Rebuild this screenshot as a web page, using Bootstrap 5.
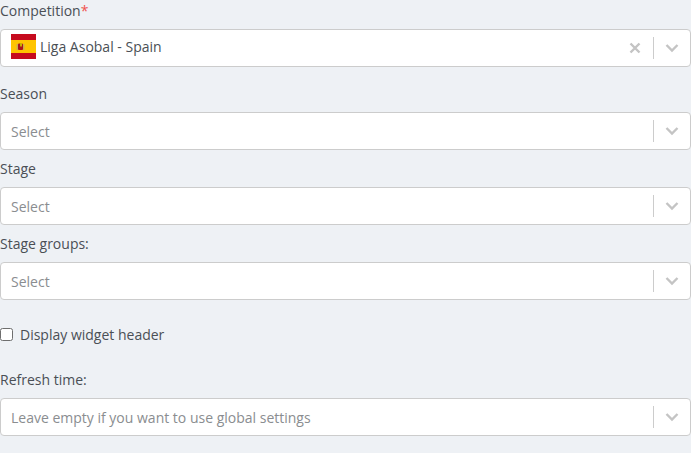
<!DOCTYPE html>
<html lang="en">
<head>
<meta charset="utf-8">
<title>Widget settings</title>
<link rel="stylesheet" href="https://cdn.jsdelivr.net/npm/bootstrap@5.3.0/dist/css/bootstrap.min.css">
<style>
html,body{background:#eef1f5;}
body{font-family:"Open Sans","Liberation Sans",sans-serif;font-size:14px;line-height:21px;color:#4a4f55;height:453px;overflow:hidden;}
.fld-label{display:block;margin-bottom:8px;height:21px;}
.req{color:#f0524f;}
.fld-group{margin-bottom:8px;}
.fld-group.first{margin-bottom:16px;}
.sel-box{height:38px;background:#fff;border:1px solid #cccccc;border-radius:4px;padding-left:10px;}
.sel-ph{color:#8a8d90;}
.sel-val{color:#4a4f55;padding-bottom:4px;}
.sel-sep{width:1px;height:22px;background:#cccccc;}
.sel-ico{width:36px;}
.sel-x{width:36px;margin-left:-1px;}
.flag{width:25px;height:25px;margin:-3px 4px 0 0;flex:none;}
.chk-row{margin-top:24px;margin-bottom:24px;height:21px;}
.chk-box{width:13px;height:13px;border:1px solid #6e6e6e;border-radius:2.5px;background:#fff;margin:0 7px 0 0;appearance:none;flex:none;}
</style>
</head>
<body>
<div class="fld-group first">
  <label class="fld-label">Competition<span class="req">*</span></label>
  <div class="sel-box d-flex align-items-center">
    <svg class="flag" viewBox="0 0 25 25" aria-hidden="true">
      <rect width="25" height="25" fill="#c60b1e"/>
      <rect y="6" width="25" height="13" fill="#ffc400"/>
      <rect x="7" y="9.5" width="5" height="6.5" rx="1" fill="#ad1519"/>
      <rect x="9" y="9" width="2" height="3.5" fill="#c8b100"/>
      <rect x="5.7" y="10" width="1" height="6" fill="#b5a27a"/>
      <rect x="12.3" y="10" width="1" height="6" fill="#b5a27a"/>
    </svg>
    <span class="sel-val flex-grow-1">Liga Asobal - Spain</span>
    <svg class="sel-x" height="12" viewBox="0 0 36 12" aria-hidden="true"><path d="M13.5 1.5l9 9M22.5 1.5l-9 9" stroke="#c4c4c4" stroke-width="2.4" fill="none"/></svg>
    <span class="sel-sep"></span>
    <svg class="sel-ico" height="10" viewBox="0 0 36 10" aria-hidden="true"><path d="M12.5 2l5.5 5.5L23.5 2" stroke="#c4c4c4" stroke-width="2.4" fill="none"/></svg>
  </div>
</div>
<div class="fld-group">
  <label class="fld-label">Season</label>
  <div class="sel-box d-flex align-items-center">
    <span class="sel-ph flex-grow-1">Select</span>
    <span class="sel-sep"></span>
    <svg class="sel-ico" height="10" viewBox="0 0 36 10" aria-hidden="true"><path d="M12.5 2l5.5 5.5L23.5 2" stroke="#c4c4c4" stroke-width="2.4" fill="none"/></svg>
  </div>
</div>
<div class="fld-group">
  <label class="fld-label">Stage</label>
  <div class="sel-box d-flex align-items-center">
    <span class="sel-ph flex-grow-1">Select</span>
    <span class="sel-sep"></span>
    <svg class="sel-ico" height="10" viewBox="0 0 36 10" aria-hidden="true"><path d="M12.5 2l5.5 5.5L23.5 2" stroke="#c4c4c4" stroke-width="2.4" fill="none"/></svg>
  </div>
</div>
<div class="fld-group">
  <label class="fld-label">Stage groups:</label>
  <div class="sel-box d-flex align-items-center">
    <span class="sel-ph flex-grow-1">Select</span>
    <span class="sel-sep"></span>
    <svg class="sel-ico" height="10" viewBox="0 0 36 10" aria-hidden="true"><path d="M12.5 2l5.5 5.5L23.5 2" stroke="#c4c4c4" stroke-width="2.4" fill="none"/></svg>
  </div>
</div>
<div class="chk-row d-flex align-items-center">
  <input type="checkbox" class="chk-box" id="hdr">
  <label for="hdr">Display widget header</label>
</div>
<div class="fld-group">
  <label class="fld-label">Refresh time:</label>
  <div class="sel-box d-flex align-items-center">
    <span class="sel-ph flex-grow-1">Leave empty if you want to use global settings</span>
    <span class="sel-sep"></span>
    <svg class="sel-ico" height="10" viewBox="0 0 36 10" aria-hidden="true"><path d="M12.5 2l5.5 5.5L23.5 2" stroke="#c4c4c4" stroke-width="2.4" fill="none"/></svg>
  </div>
</div>
<script src="https://cdn.jsdelivr.net/npm/bootstrap@5.3.0/dist/js/bootstrap.bundle.min.js"></script>
</body>
</html>
